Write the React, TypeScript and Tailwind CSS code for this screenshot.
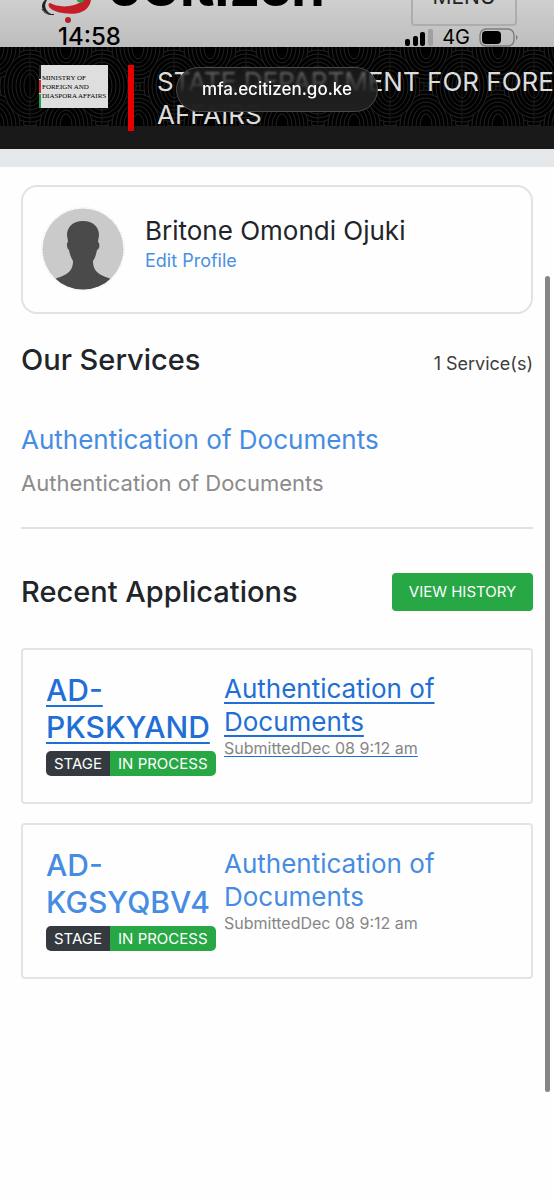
import type { ReactNode } from "react"

function BrandMark() {
  return (
    <svg width="56" height="24" viewBox="0 0 56 24" fill="none" aria-hidden="true">
      <path d="M5 0C-1 6 2 13 13 15C6 12 3 7 7 0Z" fill="#222" />
      <path d="M2 9C4 13 8 15 14 14.5" stroke="#222" strokeWidth="1" />
      <path d="M10 3C17 7 32 9 44 0H51C50 6 46 12 36 13.5C25 14.500 14 12 10 8C8 6 8 3 10 3Z" fill="#c41e28" />
      <path d="M37 0A3.500 2.500 0 0 0 44 0Z" fill="#23a148" />
      <circle cx="28" cy="20" r="3" fill="#b3202c" />
    </svg>
  )
}

function SignalIcon() {
  return (
    <svg width="28" height="18" viewBox="0 0 28 18" aria-hidden="true">
      <rect x="0" y="11" width="5" height="7" rx="2" />
      <rect x="8" y="8" width="5" height="10" rx="2" />
      <rect x="15" y="4" width="5" height="14" rx="2" />
      <rect x="23" y="1" width="5" height="17" rx="2" fill="#a0a0a0" />
    </svg>
  )
}

function BatteryIcon() {
  return (
    <svg width="39" height="19" viewBox="0 0 39 19" fill="none" aria-hidden="true">
      <rect x="1" y="1" width="34" height="17" rx="6" stroke="#7d7d7d" strokeWidth="1.4" />
      <rect x="3" y="3" width="19" height="13" rx="4" fill="#000" />
      <path d="M37 7C39 8 39 11 37 12Z" fill="#777" />
    </svg>
  )
}

function Contours() {
  const rings = [34, 30, 26, 22, 18, 14, 10, 6]
  return (
    <svg className="absolute inset-0 h-full w-full" aria-hidden="true">
      <defs>
        <pattern id="contours" width="72" height="79" patternUnits="userSpaceOnUse" x="-6">
          <g fill="#000" stroke="#222" strokeWidth="1">
            {rings.map((r) => (
              <g key={r}>
                <ellipse cx="0" cy="0" rx={r} ry={r + 6} />
                <ellipse cx="72" cy="0" rx={r} ry={r + 6} />
                <ellipse cx="0" cy="79" rx={r} ry={r + 6} />
                <ellipse cx="72" cy="79" rx={r} ry={r + 6} />
                <ellipse cx="36" cy="39" rx={r} ry={r + 6} />
              </g>
            ))}
            <path d="M36 0V79" stroke="#1a1a1a" />
          </g>
        </pattern>
      </defs>
      <rect width="100%" height="100%" fill="url(#contours)" />
    </svg>
  )
}

function Avatar() {
  return (
    <svg className="shrink-0" width="84" height="84" viewBox="0 0 84 84" aria-hidden="true">
      <defs>
        <clipPath id="face">
          <circle cx="42" cy="42" r="40.500" />
        </clipPath>
      </defs>
      <circle cx="42" cy="42" r="40.500" fill="#cacaca" />
      <path
        clipPath="url(#face)"
        d="M42 14C32 14 26 20 26 28L27 35C25 36 26 42 28 43C29 49 31 52 32 54C32 66 24 68 14 72L8 84H76L70 72C60 68 52 66 52 54C54 51 55 48 56 43C59 42 59 36 57 35L58 28C58 20 52 14 42 14Z"
        fill="#4a4a4a"
      />
      <circle cx="42" cy="42" r="41.500" fill="none" stroke="#e4e4e4" strokeWidth="1" strokeDasharray="1 2" />
    </svg>
  )
}

function StatusBar() {
  return (
    <header className="relative h-[47px] overflow-hidden bg-linear-to-b from-[#cfcfcf] to-[#bdbdbd]">
      <div className="flex h-7 items-start justify-between overflow-hidden pr-[37px] pl-10">
        <div className="flex gap-3">
          <BrandMark />
          <span className="-mt-10 text-[54px] leading-[54px] font-bold text-black">eCitizen</span>
        </div>
        <button className="-mt-8 flex h-[58px] w-[106px] shrink-0 items-center justify-center rounded-sm border-2 border-[#adadad] text-[21px] text-[#222]">
          MENU
        </button>
      </div>
      <div className="absolute inset-x-0 bottom-0 flex h-5 items-center justify-between pr-9 pl-[58px] text-black">
        <span className="text-2xl leading-5 font-medium">14:58</span>
        <div className="flex items-center gap-[9px]">
          <SignalIcon />
          <span className="text-xl leading-5">4G</span>
          <BatteryIcon />
        </div>
      </div>
    </header>
  )
}

function Banner() {
  return (
    <section className="relative h-[102px] border-b-[23px] border-[#191919] bg-black">
      <Contours />
      <div className="relative flex items-start overflow-x-clip pt-[18px] pl-[39px]">
        <div className="flex h-[43px] w-[69px] shrink-0 items-center bg-[#dedede]">
          <div className="flex h-full w-[2px] shrink-0 flex-col gap-px">
            <span className="flex-1 bg-[#222]" />
            <span className="flex-1 bg-[#d22730]" />
            <span className="flex-1 bg-[#1f9d55]" />
          </div>
          <p className="pt-0.5 pl-px font-['Liberation_Serif',serif] text-[7px] leading-[9px] whitespace-nowrap text-black">
            MINISTRY OF
            <br />
            FOREIGN AND
            <br />
            DIASPORA AFFAIRS
          </p>
        </div>
        <div className="ml-5 h-[66px] w-1.5 shrink-0 bg-[#e60000]" />
        <p className="ml-[23px] text-[26px] leading-[33px] whitespace-nowrap text-[#dcdcdc]">
          STATE DEPARTMENT FOR FOREIGN
          <br />
          AFFAIRS
        </p>
      </div>
      {/* address pill, frosted over the banner */}
      <div className="absolute top-5 left-[176px] flex h-[45px] w-[202px] items-center justify-center rounded-full border border-[#4a4a4a] bg-linear-to-b from-[#202020]/60 via-[#202020]/90 to-[#202020] text-[17px] font-medium text-white backdrop-blur-[1px]">
        mfa.ecitizen.go.ke
      </div>
    </section>
  )
}

function SectionTitle({ title, children }: { title: string; children: ReactNode }) {
  return (
    <div className="flex items-center justify-between">
      <h2 className="text-[29px] leading-9 font-medium text-[#212529]">{title}</h2>
      {children}
    </div>
  )
}

const applications = [
  { id: "AD-PKSKYAND", active: true },
  { id: "AD-KGSYQBV4", active: false },
]

function ApplicationCard({ id, active }: { id: string; active: boolean }) {
  const underline = active ? "underline decoration-2 underline-offset-4" : ""
  return (
    <a
      href="#application"
      className={`flex gap-2 rounded-sm border-2 border-[#e2e4e8] pt-[22px] pb-[26px] pl-[23px] ${active ? "text-[#1f6fd6]" : "text-[#468ce2]"}`}
    >
      <div className="w-[170px] shrink-0">
        <h3 className={`text-[30px] leading-[37px] font-medium ${underline}`}>{id}</h3>
        <div className="mt-[5px] flex w-fit overflow-hidden rounded-[5px] text-[15px] leading-[25px] whitespace-nowrap text-white">
          <span className="bg-[#343a40] px-2">STAGE</span>
          <span className="bg-[#28a745] px-2">IN PROCESS</span>
        </div>
      </div>
      <div className="w-[220px]">
        <h4 className={`text-[26px] leading-[33px] ${underline}`}>Authentication of Documents</h4>
        <p className="text-base leading-5">
          <span
            className={`text-[#868686] ${active ? "underline decoration-[#1f6fd6] decoration-1 underline-offset-2" : ""}`}
          >
            SubmittedDec 08 9:12 am
          </span>
        </p>
      </div>
    </a>
  )
}

export default function App() {
  return (
    <div className="relative min-h-screen overflow-x-clip bg-[#fefefe] font-['Inter',sans-serif]">
      <StatusBar />
      <Banner />
      <div className="h-[18px] bg-[#e4e8eb]" />

      <main className="px-[21px] pt-[18px]">
        <section className="flex h-[129px] items-start gap-5 rounded-2xl border-2 border-[#e2e2e2] px-[18px] pt-5">
          <Avatar />
          <div className="pt-[7px]">
            <h1 className="text-[26px] leading-[33px] text-[#212529]">Britone Omondi Ojuki</h1>
            <a href="#profile" className="block text-lg leading-7 text-[#4a90e2]">Edit Profile</a>
          </div>
        </section>

        <section className="mt-7">
          <SectionTitle title="Our Services">
            <span className="pt-2 text-lg text-[#3d3d3d]">1 Service(s)</span>
          </SectionTitle>
          <div className="mt-11 border-b-2 border-[#e0e2e8] pb-7">
            <a href="#service" className="block text-[26px] leading-9 text-[#468ce2]">Authentication of Documents</a>
            <p className="mt-[9px] text-[22px] leading-8 text-[#8b8b8b]">Authentication of Documents</p>
          </div>
        </section>

        <section className="mt-11">
          <SectionTitle title="Recent Applications">
            <button className="h-[38px] w-[141px] rounded-sm bg-[#28a745] text-[15px] text-white">VIEW HISTORY</button>
          </SectionTitle>
          <div className="mt-[37px] flex flex-col gap-[19px]">
            {applications.map((app) => (
              <ApplicationCard key={app.id} id={app.id} active={app.active} />
            ))}
          </div>
        </section>
      </main>

      {/* scroll indicator floats over the page */}
      <div className="absolute top-[23%] right-1 bottom-[9%] w-[5px] rounded-full bg-[#858585]" />
    </div>
  )
}
